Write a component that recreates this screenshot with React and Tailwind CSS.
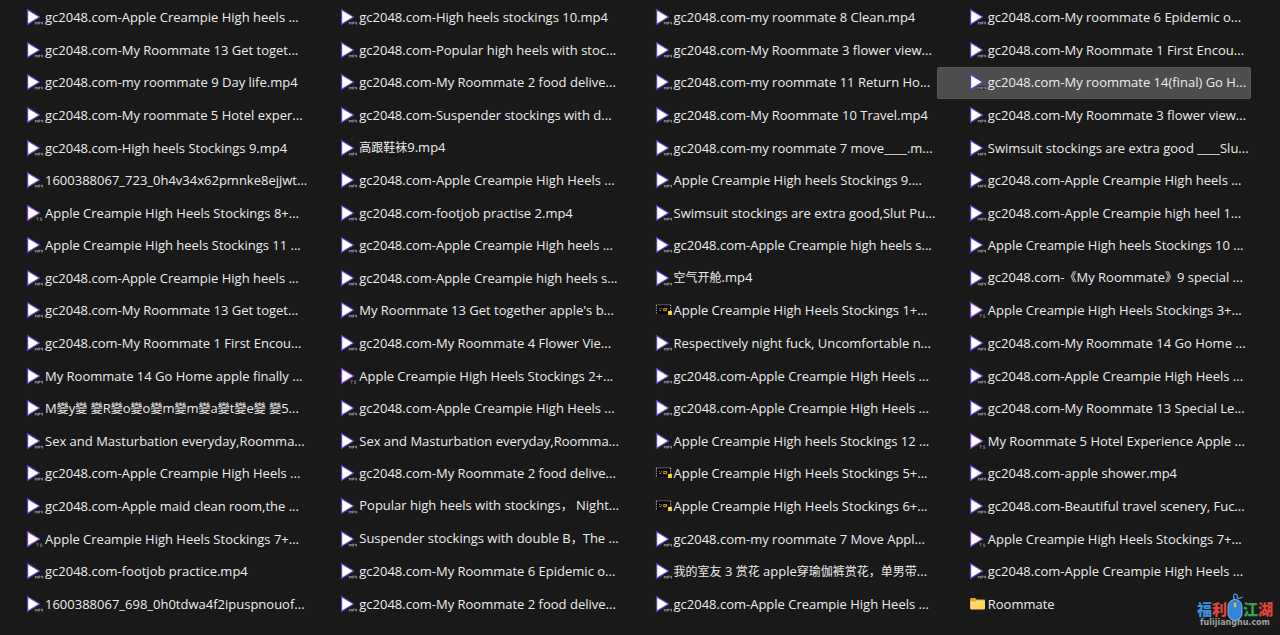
const COLUMNS = [
  [
    { name: "gc2048.com-Apple Creampie High heels ...", type: "mp4" },
    { name: "gc2048.com-My Roommate 13 Get toget...", type: "mp4" },
    { name: "gc2048.com-my roommate 9 Day life.mp4", type: "mp4" },
    { name: "gc2048.com-My roommate 5 Hotel exper...", type: "mp4" },
    { name: "gc2048.com-High heels Stockings 9.mp4", type: "mp4" },
    { name: "1600388067_723_0h4v34x62pmnke8ejjwt...", type: "mp4" },
    { name: "Apple Creampie High Heels Stockings 8+...", type: "ts" },
    { name: "Apple Creampie High heels Stockings 11 ...", type: "mp4" },
    { name: "gc2048.com-Apple Creampie High heels ...", type: "mp4" },
    { name: "gc2048.com-My Roommate 13 Get toget...", type: "mp4" },
    { name: "gc2048.com-My Roommate 1 First Encou...", type: "mp4" },
    { name: "My Roommate 14 Go Home apple finally ...", type: "mp4" },
    { name: "M變y變 變R變o變o變m變m變a變t變e變 變5...", type: "mp4" },
    { name: "Sex and Masturbation everyday,Roomma...", type: "mp4" },
    { name: "gc2048.com-Apple Creampie High Heels ...", type: "mp4" },
    { name: "gc2048.com-Apple maid clean room,the ...", type: "mp4" },
    { name: "Apple Creampie High Heels Stockings 7+...", type: "ts" },
    { name: "gc2048.com-footjob practice.mp4", type: "mp4" },
    { name: "1600388067_698_0h0tdwa4f2ipuspnouof...", type: "mp4" },
  ],
  [
    { name: "gc2048.com-High heels stockings 10.mp4", type: "mp4" },
    { name: "gc2048.com-Popular high heels with stoc...", type: "mp4" },
    { name: "gc2048.com-My Roommate 2 food delive...", type: "mp4" },
    { name: "gc2048.com-Suspender stockings with d...", type: "mp4" },
    { name: "高跟鞋袜9.mp4", type: "mp4" },
    { name: "gc2048.com-Apple Creampie High Heels ...", type: "mp4" },
    { name: "gc2048.com-footjob practise 2.mp4", type: "mp4" },
    { name: "gc2048.com-Apple Creampie High heels ...", type: "mp4" },
    { name: "gc2048.com-Apple Creampie high heels s...", type: "mp4" },
    { name: "My Roommate 13 Get together apple's b...", type: "mp4" },
    { name: "gc2048.com-My Roommate 4 Flower Vie...", type: "mp4" },
    { name: "Apple Creampie High Heels Stockings 2+...", type: "ts" },
    { name: "gc2048.com-Apple Creampie High Heels ...", type: "mp4" },
    { name: "Sex and Masturbation everyday,Roomma...", type: "mp4" },
    { name: "gc2048.com-My Roommate 2 food delive...", type: "mp4" },
    { name: "Popular high heels with stockings， Night...", type: "mp4" },
    { name: "Suspender stockings with double B，The ...", type: "mp4" },
    { name: "gc2048.com-My Roommate 6 Epidemic o...", type: "mp4" },
    { name: "gc2048.com-My Roommate 2 food delive...", type: "mp4" },
  ],
  [
    { name: "gc2048.com-my roommate 8 Clean.mp4", type: "mp4" },
    { name: "gc2048.com-My Roommate 3 flower view...", type: "mp4" },
    { name: "gc2048.com-my roommate 11 Return Ho...", type: "mp4" },
    { name: "gc2048.com-My Roommate 10 Travel.mp4", type: "mp4" },
    { name: "gc2048.com-my roommate 7 move____.m...", type: "mp4" },
    { name: "Apple Creampie High heels Stockings 9....", type: "mp4" },
    { name: "Swimsuit stockings are extra good,Slut Pu...", type: "mp4" },
    { name: "gc2048.com-Apple Creampie high heels s...", type: "mp4" },
    { name: "空气开舱.mp4", type: "mp4" },
    { name: "Apple Creampie High Heels Stockings 1+...", type: "clip" },
    { name: "Respectively night fuck, Uncomfortable n...", type: "mp4" },
    { name: "gc2048.com-Apple Creampie High Heels ...", type: "mp4" },
    { name: "gc2048.com-Apple Creampie High Heels ...", type: "mp4" },
    { name: "Apple Creampie High heels Stockings 12 ...", type: "mp4" },
    { name: "Apple Creampie High Heels Stockings 5+...", type: "clip" },
    { name: "Apple Creampie High Heels Stockings 6+...", type: "clip" },
    { name: "gc2048.com-my roommate 7 Move Appl...", type: "mp4" },
    { name: "我的室友 3 赏花 apple穿瑜伽裤赏花，单男带...", type: "mp4" },
    { name: "gc2048.com-Apple Creampie High Heels ...", type: "mp4" },
  ],
  [
    { name: "gc2048.com-My roommate 6 Epidemic o...", type: "mp4" },
    { name: "gc2048.com-My Roommate 1 First Encou...", type: "mp4" },
    { name: "gc2048.com-My roommate 14(final) Go H...", type: "mp4", selected: true },
    { name: "gc2048.com-My Roommate 3 flower view...", type: "mp4" },
    { name: "Swimsuit stockings are extra good ____Slu...", type: "mp4" },
    { name: "gc2048.com-Apple Creampie High heels ...", type: "mp4" },
    { name: "gc2048.com-Apple Creampie high heel 1...", type: "mp4" },
    { name: "Apple Creampie High heels Stockings 10 ...", type: "mp4" },
    { name: "gc2048.com-《My Roommate》9 special ...", type: "mp4" },
    { name: "Apple Creampie High Heels Stockings 3+...", type: "ts" },
    { name: "gc2048.com-My Roommate 14 Go Home ...", type: "mp4" },
    { name: "gc2048.com-Apple Creampie High Heels ...", type: "mp4" },
    { name: "gc2048.com-My Roommate 13 Special Le...", type: "mp4" },
    { name: "My Roommate 5 Hotel Experience Apple ...", type: "ts" },
    { name: "gc2048.com-apple shower.mp4", type: "mp4" },
    { name: "gc2048.com-Beautiful travel scenery, Fuc...", type: "mp4" },
    { name: "Apple Creampie High Heels Stockings 7+...", type: "ts" },
    { name: "gc2048.com-Apple Creampie High Heels ...", type: "mp4" },
    { name: "Roommate", type: "folder" },
  ],
];

// Full-width characters are set one size smaller than the Latin text
const WIDE = /([\u3000-\u9fff\uff00-\uffef]+)/;

function VideoIcon({ type }) {
  const edge = type === "ts" ? "#8a4fd0" : "#6048cf";
  return (
    <svg viewBox="0 0 18 18" className="h-[18px] w-[18px] shrink-0" aria-hidden="true">
      <path d="M1.4 1.2 L14 9 L1.4 16.8 Z" fill={edge} stroke={edge} strokeWidth="0.8" strokeLinejoin="round" />
      <path d="M2.2 2.8 L12.6 9 L2.2 15.2 Z" fill="#fff" />
      {type === "ts" ? (
        <g>
          <path d="M10 13.2h6.6v3.6H10z" fill="#191919" />
          <path d="M10.5 13.8h2.4M11.7 13.8v2.8M16 14h-1.6v1.1h1.5v1.4h-1.8" fill="none" stroke="#8d8d8d" strokeWidth="0.7" />
        </g>
      ) : (
        <g>
          <path d="M8.6 13.2h8.4v3.6H8.6z" fill="#191919" />
          <path
            d="M9.3 16.5v-2.5l1 1.3 1-1.3v2.5M12.7 16.6v-2.6h1.3v1.4h-1.3M15.3 13.8v1.4h1.6M16.4 13.8v2.8"
            fill="none"
            stroke="#a5a5a5"
            strokeWidth="0.7"
          />
        </g>
      )}
    </svg>
  );
}

function ClipIcon() {
  return (
    <svg viewBox="0 0 18 18" className="h-[18px] w-[18px] shrink-0" aria-hidden="true">
      <path d="M1 4h15v9H1z" fill="#050505" />
      <path d="M1 3.8h15" stroke="#8a8a8a" strokeWidth="0.6" />
      <path d="M1.4 4v9.5M15.6 4v6" stroke="#d8d8d8" strokeWidth="0.9" strokeDasharray="1.3 1.1" />
      <path d="M4 7.2l1.5 1.2M4.2 9.6h2.2M6 7.8h1.3" stroke="#b9b9b9" strokeWidth="0.7" />
      <path d="M8.2 7h4v2.2l-1 1H8.2z" fill="#d07a18" />
      <path d="M9.2 8h1.6v1H9.2z" fill="#3a1c05" />
      <path d="M13 10h4v4h-4z" fill="#f1c90f" />
      <path d="M14 10.8h1.6v1.4H14z" fill="#fff0a0" />
    </svg>
  );
}

function FolderIcon() {
  return (
    <svg viewBox="0 0 18 18" className="h-[18px] w-[18px] shrink-0" aria-hidden="true">
      <defs>
        <linearGradient id="folder" x1="0" y1="0" x2="1" y2="1">
          <stop offset="0" stopColor="#ffe392" />
          <stop offset="1" stopColor="#ffc93f" />
        </linearGradient>
      </defs>
      <path d="M1.2 4a1 1 0 0 1 1-1h3.9l1.6 1.5H15a1 1 0 0 1 1 1V8H1.2z" fill="#eda51a" />
      <path d="M1.2 7.2a.8.8 0 0 1 .8-.8h4.6l1.4-1h7.2a.8.8 0 0 1 .8.8v7.4a.9.9 0 0 1-.9.9H2.1a.9.9 0 0 1-.9-.9z" fill="url(#folder)" />
    </svg>
  );
}

function FileIcon({ type }) {
  if (type === "folder") return <FolderIcon />;
  if (type === "clip") return <ClipIcon />;
  return <VideoIcon type={type} />;
}

function FileItem({ name, type, selected }) {
  return (
    <li className="flex min-w-0">
      <button
        type="button"
        aria-pressed={!!selected}
        className={`flex w-full min-w-0 items-center gap-px rounded-xs border pb-px pl-[31px] text-left ${
          selected ? "border-[#575757] bg-[#4d4d4d]" : "border-transparent"
        }`}
      >
        <FileIcon type={type} />
        <span className="whitespace-nowrap">
          {name.split(WIDE).map((part, i) =>
            i % 2 ? (
              <span key={i} className="text-[12px]">
                {part}
              </span>
            ) : (
              part
            )
          )}
        </span>
      </button>
    </li>
  );
}

function Watermark() {
  return (
    <div className="absolute right-[7px] bottom-[7px] flex flex-col items-center">
      <div className="flex items-end font-['Noto_Sans_CJK_SC',sans-serif] text-[15px] leading-[18px] font-black">
        <span className="text-[#3d8fe0]">福</span>
        <span className="text-[#e0453c]">利</span>
        <svg viewBox="0 0 16 30" className="-mb-1 h-[30px] w-[16px]" aria-hidden="true">
          <path d="M8 8C5 4 7 1 9.5 2.5s-1 4 2 4 3-2 4-1" fill="none" stroke="#4b9be6" strokeWidth="1.3" />
          <rect x="1" y="7.5" width="14" height="21" rx="7" fill="#3186dc" stroke="#9bc7ee" strokeWidth="0.8" />
          <path d="M8 8v9" stroke="#1d5fa8" strokeWidth="0.8" />
          <rect x="6.9" y="10.5" width="2.2" height="5" rx="1.1" fill="#f2c230" />
        </svg>
        <span className="text-[#35a352]">江</span>
        <span className="text-[#e0453c]">湖</span>
      </div>
      <span className="font-['DejaVu_Sans',sans-serif] text-[8px] leading-[10px] font-bold text-[#a0a0a0]">
        fulijianghu.com
      </span>
    </div>
  );
}

function App() {
  return (
    <main className="relative min-h-screen overflow-hidden bg-[#191919] font-['Open_Sans','Noto_Sans_CJK_SC',sans-serif] text-[13px] leading-[18px] text-[#ececec]">
      <div className="-ml-1.5 grid min-h-screen grid-cols-4 pt-0.5 pr-[29px] pb-[15px]">
        {COLUMNS.map((files, i) => (
          <ul key={i} className="grid min-w-0 grid-cols-1 grid-rows-[repeat(19,1fr)] gap-px">
            {files.map((file, j) => (
              <FileItem key={j} {...file} />
            ))}
          </ul>
        ))}
      </div>
      <Watermark />
    </main>
  );
}

export default App;
